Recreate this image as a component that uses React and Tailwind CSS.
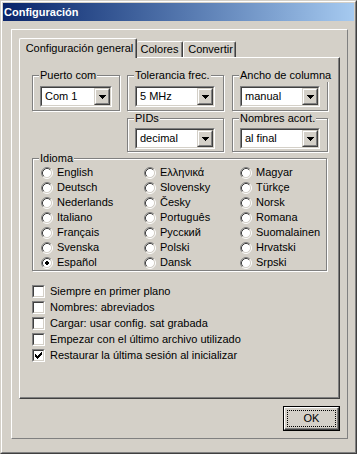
import React from "react";

function Arrow() {
  return (
    <svg width="7" height="4" viewBox="0 0 7 4" shapeRendering="crispEdges">
      <rect x="0" y="0" width="7" height="1" fill="#000" />
      <rect x="1" y="1" width="5" height="1" fill="#000" />
      <rect x="2" y="2" width="3" height="1" fill="#000" />
      <rect x="3" y="3" width="1" height="1" fill="#000" />
    </svg>
  );
}

function Combo({ className, value }) {
  return (
    <div className={`flex h-[21px] border border-t-[#808080] border-l-[#808080] border-r-white border-b-white ${className}`}>
      <div className="flex flex-1 border border-t-[#404040] border-l-[#404040] border-r-[#d4d0c8] border-b-[#d4d0c8] bg-white">
        <div className="flex flex-1 items-center pl-[3px]">{value}</div>
        <div className="w-[16px] h-full border border-t-[#d4d0c8] border-l-[#d4d0c8] border-r-[#404040] border-b-[#404040]">
          <div className="h-full flex items-center justify-center bg-[#d4d0c8] border border-t-white border-l-white border-r-[#808080] border-b-[#808080]">
            <Arrow />
          </div>
        </div>
      </div>
    </div>
  );
}

function Group({ label, className, children }) {
  return (
    <div className={`relative border border-[#808080] shadow-[inset_1px_1px_0_#fff,1px_1px_0_#fff] ${className}`}>
      <span className="absolute left-[6px] top-[-7px] bg-[#d4d0c8] px-px leading-[13px] whitespace-nowrap">{label}</span>
      {children}
    </div>
  );
}

function Radio({ checked, label }) {
  return (
    <div className="flex items-center h-[15px] gap-[4px] whitespace-nowrap">
      <svg width="12" height="12" viewBox="0 0 12 12" className="shrink-0">
        <circle cx="6" cy="6" r="4.5" fill="#fff" />
        <path d="M2.11 9.89 A5.5 5.5 0 0 1 9.89 2.11" fill="none" stroke="#808080" strokeWidth="1" />
        <path d="M9.89 2.11 A5.5 5.5 0 0 1 2.11 9.89" fill="none" stroke="#ffffff" strokeWidth="1" />
        <path d="M2.82 9.18 A4.5 4.5 0 0 1 9.18 2.82" fill="none" stroke="#404040" strokeWidth="1" />
        <path d="M9.18 2.82 A4.5 4.5 0 0 1 2.82 9.18" fill="none" stroke="#d4d0c8" strokeWidth="1" />
        {checked && (
          <g shapeRendering="crispEdges" fill="#000">
            <rect x="5" y="4" width="2" height="1" />
            <rect x="4" y="5" width="4" height="2" />
            <rect x="5" y="7" width="2" height="1" />
          </g>
        )}
      </svg>
      <span>{label}</span>
    </div>
  );
}

function Check({ checked, label }) {
  return (
    <div className="flex items-center h-[16px] gap-[5px] whitespace-nowrap">
      <div className="w-[13px] h-[13px] shrink-0 border border-t-[#808080] border-l-[#808080] border-r-white border-b-white">
        <div className="w-full h-full bg-white border border-t-[#404040] border-l-[#404040] border-r-[#d4d0c8] border-b-[#d4d0c8]">
          {checked && (
            <svg width="9" height="9" viewBox="0 0 9 9" shapeRendering="crispEdges">
              <g fill="#000" transform="translate(1 1)">
                <rect x="6" y="0" width="1" height="1" />
                <rect x="5" y="1" width="2" height="1" />
                <rect x="0" y="2" width="1" height="1" />
                <rect x="4" y="2" width="3" height="1" />
                <rect x="0" y="3" width="2" height="1" />
                <rect x="3" y="3" width="3" height="1" />
                <rect x="0" y="4" width="5" height="1" />
                <rect x="1" y="5" width="3" height="1" />
                <rect x="2" y="6" width="1" height="1" />
              </g>
            </svg>
          )}
        </div>
      </div>
      <span>{label}</span>
    </div>
  );
}

const col1 = ["English", "Deutsch", "Nederlands", "Italiano", "Français", "Svenska", "Español"];
const col2 = ["Ελληνικά", "Slovensky", "Česky", "Português", "Русский", "Polski", "Dansk"];
const col3 = ["Magyar", "Türkçe", "Norsk", "Romana", "Suomalainen", "Hrvatski", "Srpski"];

export default function App() {
  return (
    <div className="w-[357px] h-[454px] bg-[#d4d0c8] font-['Liberation_Sans',Arial,sans-serif] text-[11px] leading-[13px] text-black border border-t-[#d4d0c8] border-l-[#d4d0c8] border-r-[#404040] border-b-[#404040]">
      <div className="h-full flex flex-col p-px border border-t-white border-l-white border-r-[#808080] border-b-[#808080]">
        <div className="h-[18px] shrink-0 flex items-center pl-px bg-linear-to-r from-[#0a246a] to-[#a6caf0] text-white font-bold">
          Configuración
        </div>
        <div className="ml-[8px] mt-[8px] w-[337px] h-[410px] pt-[8px] pl-[7px] border border-t-white border-l-white border-r-[#808080] border-b-[#808080]">
          <div className="flex items-end h-[19px]">
            <div className="relative z-10 -mb-px h-[20px] w-[118px] flex items-center justify-center pl-[3px] bg-[#d4d0c8] rounded-t-[2px] border-l border-t border-r border-t-white border-l-white border-r-[#404040] shadow-[inset_-1px_0_0_#808080] whitespace-nowrap">
              Configuración general
            </div>
            <div className="h-[16px] w-[46px] flex items-center justify-center rounded-t-[2px] border-t border-r border-t-white border-r-[#404040] shadow-[inset_-1px_0_0_#808080]">
              Colores
            </div>
            <div className="h-[16px] w-[53px] flex items-center justify-center pl-[2px] rounded-t-[2px] border-l border-t border-r border-t-white border-l-white border-r-[#404040] shadow-[inset_-1px_0_0_#808080]">
              Convertir
            </div>
          </div>
          <div className="w-[321px] h-[342px] pt-[17px] pl-[12px] border border-t-white border-l-white border-r-[#404040] border-b-[#404040] shadow-[inset_-1px_-1px_0_#808080]">
            <div className="flex">
              <Group label="Puerto com" className="w-[88px] h-[36px] pt-[10px] pl-[7px]">
                <Combo className="w-[72px]" value="Com 1" />
              </Group>
              <Group label="Tolerancia frec." className="ml-[7px] w-[97px] h-[36px] pt-[10px] pl-[7px]">
                <Combo className="w-[80px]" value="5 MHz" />
              </Group>
              <Group label="Ancho de columna" className="ml-[8px] w-[96px] h-[36px] pt-[10px] pl-[7px]">
                <Combo className="w-[80px]" value="manual" />
              </Group>
            </div>
            <div className="flex mt-[7px]">
              <Group label="PIDs" className="ml-[95px] w-[97px] h-[34px] pt-[9px] pl-[7px]">
                <Combo className="w-[80px]" value="decimal" />
              </Group>
              <Group label="Nombres acort." className="ml-[8px] w-[96px] h-[34px] pt-[9px] pl-[7px]">
                <Combo className="w-[80px]" value="al final" />
              </Group>
            </div>
            <Group label="Idioma" className="mt-[6px] w-[295px] h-[113px] pt-[6px] pl-[8px]">
              <div className="grid grid-cols-[103px_96px_1fr]">
                <div className="flex flex-col">
                  {col1.map((l) => (
                    <Radio key={l} label={l} checked={l === "Español"} />
                  ))}
                </div>
                <div className="flex flex-col">
                  {col2.map((l) => (
                    <Radio key={l} label={l} />
                  ))}
                </div>
                <div className="flex flex-col">
                  {col3.map((l) => (
                    <Radio key={l} label={l} />
                  ))}
                </div>
              </div>
            </Group>
            <div className="mt-[12px] flex flex-col">
              <Check label="Siempre en primer plano" />
              <Check label="Nombres: abreviados" />
              <Check label="Cargar: usar config. sat grabada" />
              <Check label="Empezar con el último archivo utilizado" />
              <Check label="Restaurar la última sesión al inicializar" checked />
            </div>
          </div>
          <div className="w-[321px] mt-[7px] flex justify-end">
            <div className="w-[57px] h-[25px] border border-black">
              <div className="h-full p-[2px] border border-t-white border-l-white border-r-[#404040] border-b-[#404040] shadow-[inset_-1px_-1px_0_#808080]">
                <div className="h-full flex items-center justify-center border border-dotted border-black">OK</div>
              </div>
            </div>
          </div>
        </div>
      </div>
    </div>
  );
}
